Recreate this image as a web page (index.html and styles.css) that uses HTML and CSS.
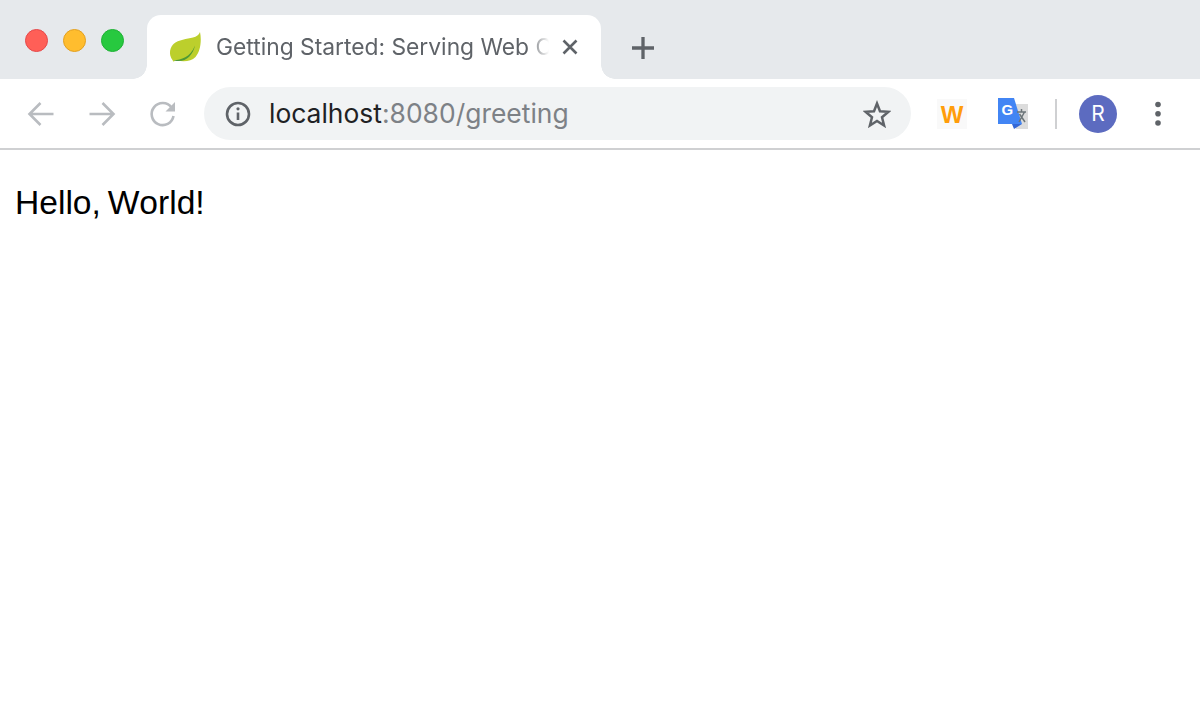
FILE: index.html
```html
<!DOCTYPE html>
<html lang="en">
<head>
<meta charset="utf-8">
<title>Getting Started: Serving Web Content</title>
<link rel="stylesheet" href="styles.css">
</head>
<body>
<header class="chrome">
  <div class="tabstrip">
    <div class="lights">
      <span class="light red"></span>
      <span class="light yellow"></span>
      <span class="light green"></span>
    </div>
    <div class="tab">
      <svg class="favicon" viewBox="0 0 32 32" width="32" height="32" aria-hidden="true">
        <path d="M31 1C30 4 27.500 5.500 24 6.500C18 8.200 9.500 8.500 4.500 13C0.500 17 0.200 23 2 26.500C2.800 28 3.800 29.800 4.800 30.800C5.800 29.500 6.800 28.800 7.500 29C14 31.500 22 30.500 26.500 26C31.500 20.500 32.800 9.500 31 1Z" fill="#bccf2c"/>
        <path d="M5 29.500C12 28.500 21 27 26 14.500C24 24 17 31 8 30C6.800 30 5.600 30 5 29.500Z" fill="#4f9a35"/>
      </svg>
      <span class="tab-title">Getting Started: Serving Web C</span>
      <svg class="tab-close" viewBox="0 0 18 18" width="18" height="18" aria-hidden="true">
        <path d="M2.500 2.500L15.500 15.500M15.500 2.500L2.500 15.500" fill="none" stroke="#5f6368" stroke-width="2.600"/>
      </svg>
    </div>
    <div class="strip-rest">
      <svg class="new-tab" viewBox="0 0 24 24" width="24" height="24" aria-hidden="true">
        <path d="M12 1V23M1 12H23" fill="none" stroke="#5f6368" stroke-width="3.300"/>
      </svg>
    </div>
  </div>
  <div class="toolbar">
    <div class="nav">
      <svg viewBox="0 0 28 26" width="28" height="26" aria-hidden="true">
        <path d="M26.500 13H3M13.500 2L2.500 13L13.500 24" fill="none" stroke="#b9bcc0" stroke-width="2.600"/>
      </svg>
      <svg viewBox="0 0 28 26" width="28" height="26" aria-hidden="true">
        <path d="M1.500 13H25M14.500 2L25.500 13L14.500 24" fill="none" stroke="#b9bcc0" stroke-width="2.600"/>
      </svg>
      <svg viewBox="0 0 28 28" width="28" height="28" aria-hidden="true">
        <path d="M22.500 7.500A11 11 0 1 0 24.500 16" fill="none" stroke="#b9bcc0" stroke-width="2.600"/>
        <path d="M26 2V11.500H16.500Z" fill="#b9bcc0"/>
      </svg>
    </div>
    <div class="omnibox">
      <svg class="info" viewBox="0 0 26 26" width="26" height="26" aria-hidden="true">
        <circle cx="13" cy="13" r="11" fill="none" stroke="#5f6368" stroke-width="2.600"/>
        <path d="M13 11.500V19" stroke="#5f6368" stroke-width="2.600"/>
        <circle cx="13" cy="7.800" r="1.600" fill="#5f6368"/>
      </svg>
      <div class="url"><span class="host">localhost</span><span class="rest">:8080/greeting</span></div>
      <svg class="star" viewBox="0 0 28 28" width="28" height="28" aria-hidden="true">
        <path d="M14 3.500L17 11.200L25.500 11.800L19 17.200L21.100 25.500L14 21L6.900 25.500L9 17.200L2.500 11.800L11 11.200Z" fill="none" stroke="#5f6368" stroke-width="2.500"/>
      </svg>
    </div>
    <div class="extensions">
      <div class="ext-w">W</div>
      <svg class="ext-translate" viewBox="0 0 32 32" width="32" height="32" aria-hidden="true">
        <path d="M15 6H31V31H19Z" fill="#dcdcdc"/>
        <path d="M1 0H17L25 26H1Z" fill="#4285f4"/>
        <path d="M15 26H25L17 31Z" fill="#3367d6"/>
        <text class="ext-g" x="4.500" y="17">G</text>
        <path d="M20 14H29M24.500 11V14M22 24L27.500 14M22.500 16L28 24" fill="none" stroke="#6b7478" stroke-width="1.500"/>
      </svg>
      <span class="divider"></span>
      <div class="avatar">R</div>
      <svg class="menu" viewBox="0 0 6 26" width="6" height="26" aria-hidden="true">
        <circle cx="3" cy="3.500" r="2.800" fill="#5f6368"/>
        <circle cx="3" cy="12.800" r="2.800" fill="#5f6368"/>
        <circle cx="3" cy="22" r="2.800" fill="#5f6368"/>
      </svg>
    </div>
  </div>
</header>
<main class="page">Hello, World!</main>
</body>
</html>
```
FILE: styles.css
```css
html, body {
  margin: 0;
  padding: 0;
  height: 100%;
  background: #fff;
}

body {
  font-family: "Inter", "Liberation Sans", sans-serif;
  overflow: hidden;
}

.chrome {
  border-bottom: 2px solid #cfd0d2;
}

.tabstrip {
  display: flex;
  height: 79px;
  background: #e6e9ec;
}

.lights {
  display: flex;
  gap: 15px;
  width: 147px;
  flex: none;
  box-sizing: border-box;
  padding: 29px 0 0 24.500px;
}

.light {
  width: 23px;
  height: 23px;
  border-radius: 50%;
  box-sizing: border-box;
}

.red { background: #ff5f57; border: 1px solid #e5484a; }
.yellow { background: #ffbd2e; border: 1px solid #e3a01f; }
.green { background: #27c93f; border: 1px solid #1fb135; }

.tab {
  position: relative;
  display: flex;
  align-items: center;
  width: 454px;
  flex: none;
  box-sizing: border-box;
  margin-top: 15px;
  padding: 0 22px;
  background: #fff;
  border-radius: 14px 14px 0 0;
}

.tab::before,
.tab::after {
  content: "";
  position: absolute;
  bottom: 0;
  width: 14px;
  height: 14px;
}

.tab::before {
  left: -14px;
  background: radial-gradient(circle at 0 0, transparent 13.500px, #fff 14px);
}

.tab::after {
  right: -14px;
  background: radial-gradient(circle at 100% 0, transparent 13.500px, #fff 14px);
}

.favicon {
  flex: none;
  margin-right: 15px;
}

.tab-title {
  flex: none;
  margin-bottom: 2px;
  white-space: nowrap;
  font-size: 22.800px;
  color: #5f6368;
  -webkit-mask-image: linear-gradient(to right, #000 calc(100% - 24px), transparent calc(100% - 3px));
  mask-image: linear-gradient(to right, #000 calc(100% - 24px), transparent calc(100% - 3px));
}

.tab-close {
  flex: none;
  margin-left: auto;
}

.strip-rest {
  flex: 1;
  display: flex;
  padding: 36px 0 0 30px;
  align-items: flex-start;
}

.toolbar {
  display: flex;
  align-items: center;
  height: 69px;
  background: #fff;
}

.nav {
  display: flex;
  align-items: center;
  gap: 33px;
  width: 204px;
  box-sizing: border-box;
  padding-left: 27px;
  flex: none;
}

.omnibox {
  display: flex;
  align-items: center;
  width: 707px;
  height: 53px;
  box-sizing: border-box;
  padding: 0 20px 0 21px;
  background: #f1f3f4;
  border-radius: 27px;
  flex: none;
}

.url {
  flex: 1;
  margin: 0 0 2px 18px;
  font-size: 26.450px;
  white-space: nowrap;
}

.host { color: #202124; }
.rest { color: #7d8186; }

.extensions {
  display: flex;
  align-items: center;
  flex: 1;
  padding-left: 26px;
}

.ext-w {
  width: 30px;
  height: 30px;
  background: #f9f9f9;
  color: #ff9d0a;
  font-family: "Liberation Sans", sans-serif;
  font-weight: 700;
  font-size: 24px;
  line-height: 31px;
  text-align: center;
}

.ext-translate {
  margin-left: 30px;
}

.ext-g {
  font-family: "Liberation Sans", sans-serif;
  font-size: 15px;
  font-weight: 700;
  fill: #fff;
}

.divider {
  width: 2px;
  height: 30px;
  margin-left: 26px;
  background: #cfd0d2;
}

.avatar {
  width: 38px;
  height: 38px;
  margin-left: 22px;
  border-radius: 50%;
  background: #5c6bc0;
  color: #fff;
  font-size: 21px;
  line-height: 38px;
  text-align: center;
}

.menu {
  margin-left: 38px;
}

.page {
  padding: 36px 0 0 15px;
  font-family: "Liberation Sans", sans-serif;
  font-size: 33.600px;
  font-kerning: none;
  word-spacing: -2.500px;
  line-height: 34px;
  color: #000;
}
```
